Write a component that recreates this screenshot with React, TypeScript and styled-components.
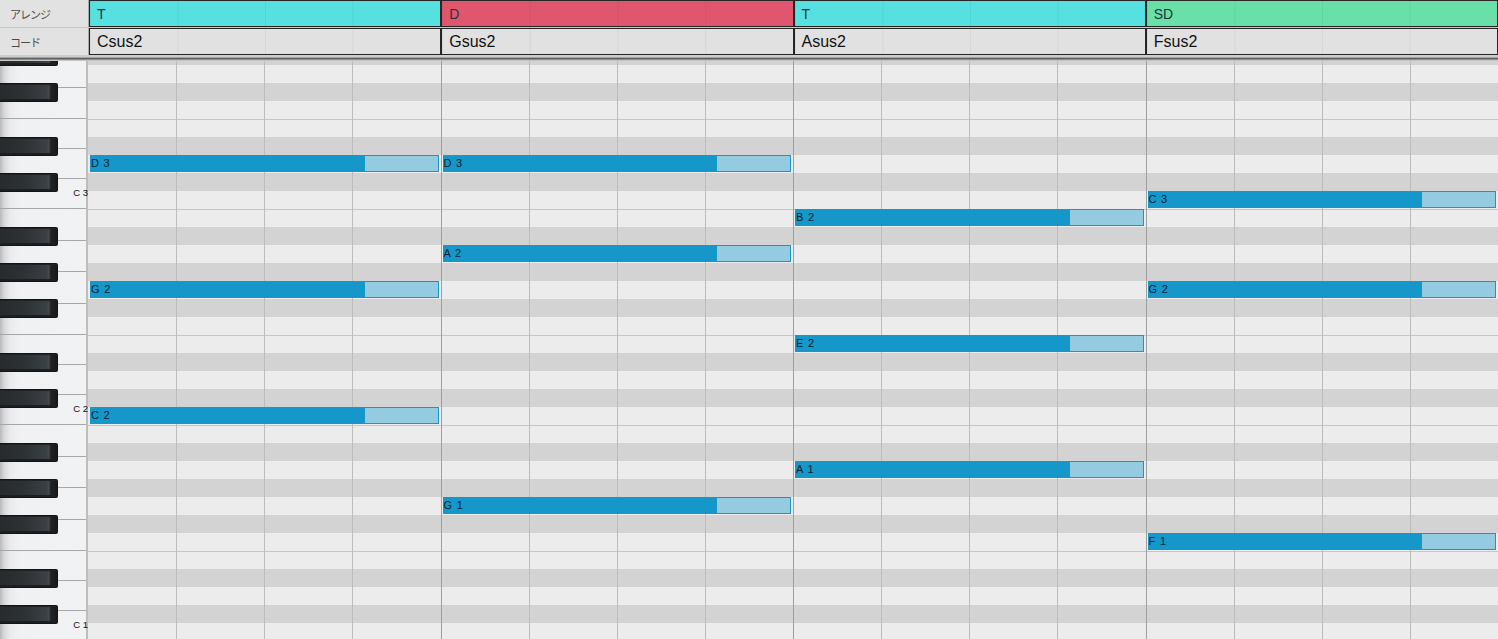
import React from 'react';
import styled, { createGlobalStyle } from 'styled-components';

const GlobalStyle = createGlobalStyle`
  html, body { margin: 0; padding: 0; background: #e2e2e2; overflow: hidden; }
  body { font-family: "Liberation Sans", Arial, sans-serif; }
`;

const NAMES = ['C', 'C#', 'D', 'D#', 'E', 'F', 'F#', 'G', 'G#', 'A', 'A#', 'B'];
const TOP_PITCH = 47; // B3
const ROWS = 36; // B3 .. C1
const BLACK = [1, 3, 6, 8, 10];

const pitchOf = (name: string, oct: number) => oct * 12 + NAMES.indexOf(name);
const rowOf = (p: number) => TOP_PITCH - p;

type Section = { label: string; color: string; chord: string; notes: [string, number][] };

const SECTIONS: Section[] = [
  { label: 'T', color: '#56e0e0', chord: 'Csus2', notes: [['D', 3], ['G', 2], ['C', 2]] },
  { label: 'D', color: '#e0566f', chord: 'Gsus2', notes: [['D', 3], ['A', 2], ['G', 1]] },
  { label: 'T', color: '#56e0e0', chord: 'Asus2', notes: [['B', 2], ['E', 2], ['A', 1]] },
  { label: 'SD', color: '#68e0a8', chord: 'Fsus2', notes: [['C', 3], ['G', 2], ['F', 1]] },
];

const Frame = styled.div`
  width: 1498px;
  height: 639px;
  display: flex;
  flex-direction: column;
  overflow: hidden;
  background: #e2e2e2;
`;

const Header = styled.div`
  display: grid;
  grid-template-columns: 89px repeat(4, minmax(0, 1fr));
  grid-template-rows: 27px 27px;
  row-gap: 1px;
  background: #c6c6c6;
  flex: none;
`;

const RowLabel = styled.div`
  grid-column: 1;
  display: flex;
  align-items: center;
  padding-left: 10px;
  background: #e2e2e2;
  border-right: 1px solid #a8a8a8;
  font-family: "Noto Sans CJK JP", "Liberation Sans", sans-serif;
  font-size: 11px;
  letter-spacing: -1px;
  color: #4a4a4a;
`;

const HeaderCell = styled.div<{ $bg: string; $size: number; $ink: string }>`
  display: flex;
  align-items: center;
  padding-left: 7px;
  min-width: 0;
  border: 1px solid #262626;
  background-color: ${(p) => p.$bg};
  background-image: linear-gradient(90deg, rgba(0, 0, 0, 0.05) 1px, transparent 1px);
  background-size: 25% 100%;
  font-size: ${(p) => p.$size}px;
  color: ${(p) => p.$ink};
  white-space: nowrap;
`;

const Separator = styled.div`
  flex: none;
  height: 6px;
  background: linear-gradient(
    to bottom,
    #cdcdcd 0 2px,
    #a3a3a3 2px 3px,
    #5f5f5f 3px 4px,
    #8e8e8e 4px 5px,
    #c4c4c4 5px 6px
  );
`;

const Body = styled.div`
  flex: 1;
  display: flex;
  overflow: hidden;
  min-height: 0;
`;

const Keyboard = styled.div`
  flex: none;
  width: 88px;
  box-sizing: border-box;
  border-right: 2px solid #bdbdbd;
  overflow: visible;
`;

const KeyStack = styled.div`
  display: grid;
  grid-template-areas: 'stack';
  margin-top: -68px;
`;

const WhiteKeys = styled.div`
  grid-area: stack;
  display: flex;
  flex-direction: column;
`;

const WhiteKey = styled.div<{ $h: number }>`
  height: ${(p) => p.$h}px;
  flex: none;
  box-sizing: border-box;
  border-bottom: 1px solid #a6a6a6;
  background: linear-gradient(90deg, #b9b9bb 0px, #d6d7d9 4px, #e9eaec 10px, #f0f1f3 18px, #f1f2f4 100%);
  display: flex;
  justify-content: flex-end;
  align-items: flex-end;
`;

const KeyLabel = styled.span`
  font-size: 9.5px;
  line-height: 10px;
  color: #111;
  margin-bottom: 10px;
  margin-right: -2px;
  white-space: nowrap;
`;

const BlackKeys = styled.div`
  grid-area: stack;
  display: grid;
  grid-template-rows: repeat(${ROWS}, 18px);
  align-self: start;
`;

const BlackKey = styled.div<{ $row: number }>`
  grid-row: ${(p) => p.$row};
  width: 58px;
  height: 19px;
  box-sizing: border-box;
  border: 1px solid #121415;
  border-left: none;
  border-radius: 0 2px 2px 0;
  background: linear-gradient(
    90deg,
    #272b2d 0%,
    #2d3235 45%,
    #3a4044 82%,
    #43494d 86%,
    #1f2224 89%,
    #181a1b 100%
  );
  box-shadow: inset 0 -2px 0 #1c1f21, inset 0 1px 0 #202325;
`;

const Roll = styled.div`
  flex: 1;
  min-width: 0;
  align-self: flex-start;
  margin-top: -68px;
  display: grid;
  grid-template-columns: repeat(16, minmax(0, 1fr));
  grid-template-rows: repeat(${ROWS}, 18px);
`;

const Stripe = styled.div<{ $row: number; $dark: boolean; $line: boolean }>`
  grid-column: 1 / -1;
  grid-row: ${(p) => p.$row};
  background: ${(p) => (p.$dark ? '#d3d3d3' : '#ececec')};
  box-shadow: ${(p) => (p.$line ? 'inset 0 1px 0 #c6c6c6' : 'none')};
`;

const BeatLine = styled.div<{ $col: number; $bar: boolean }>`
  grid-column: ${(p) => p.$col};
  grid-row: 1 / -1;
  border-left: 1px solid ${(p) => (p.$bar ? '#9f9f9f' : '#bcbcbc')};
`;

const Note = styled.div<{ $row: number; $col: number }>`
  grid-row: ${(p) => p.$row};
  grid-column: ${(p) => p.$col} / span 4;
  align-self: start;
  height: 17px;
  margin: 0 2px 0 2px;
  display: flex;
  min-width: 0;
`;

const NoteBody = styled.div`
  flex: 0 0 78.2%;
  background: #1597c9;
  padding-left: 1px;
  font-size: 11px;
  line-height: 17px;
  letter-spacing: 0.8px;
  color: #0a2431;
  white-space: nowrap;
  overflow: hidden;
`;

const NoteTail = styled.div`
  flex: 1;
  box-sizing: border-box;
  background: #94cbe0;
  border: 1px solid #1597c9;
`;

type WK = { name: string; oct: number; h: number };
const whiteKeys: WK[] = [];
for (const oct of [3, 2, 1]) {
  for (const n of ['B', 'A', 'G', 'F']) whiteKeys.push({ name: n, oct, h: 31.5 });
  for (const n of ['E', 'D', 'C']) whiteKeys.push({ name: n, oct, h: 30 });
}

const rows = Array.from({ length: ROWS }, (_, i) => {
  const p = TOP_PITCH - i;
  const pc = ((p % 12) + 12) % 12;
  return { row: i + 1, black: BLACK.includes(pc), line: pc === 4 || pc === 11 };
});

export default function App() {
  return (
    <>
      <GlobalStyle />
      <Frame>
        <Header>
          <RowLabel>アレンジ</RowLabel>
          {SECTIONS.map((s, i) => (
            <HeaderCell key={`a${i}`} $bg={s.color} $size={14} $ink="#1f3535">
              {s.label}
            </HeaderCell>
          ))}
          <RowLabel>コード</RowLabel>
          {SECTIONS.map((s, i) => (
            <HeaderCell key={`c${i}`} $bg="#e1e1e1" $size={16} $ink="#111111">
              {s.chord}
            </HeaderCell>
          ))}
        </Header>
        <Separator />
        <Body>
          <Keyboard>
            <KeyStack>
              <WhiteKeys>
                {whiteKeys.map((k, i) => (
                  <WhiteKey key={i} $h={k.h}>
                    {k.name === 'C' && <KeyLabel>{`C ${k.oct}`}</KeyLabel>}
                  </WhiteKey>
                ))}
              </WhiteKeys>
              <BlackKeys>
                {rows.filter((r) => r.black).map((r) => (
                  <BlackKey key={r.row} $row={r.row} />
                ))}
              </BlackKeys>
            </KeyStack>
          </Keyboard>
          <Roll>
            {rows.map((r) => (
              <Stripe key={`s${r.row}`} $row={r.row} $dark={r.black} $line={r.line} />
            ))}
            {Array.from({ length: 15 }, (_, i) => i + 2).map((c) => (
              <BeatLine key={`b${c}`} $col={c} $bar={(c - 1) % 4 === 0} />
            ))}
            {SECTIONS.flatMap((s, bar) =>
              s.notes.map(([n, o]) => (
                <Note key={`${bar}${n}${o}`} $row={rowOf(pitchOf(n, o)) + 1} $col={bar * 4 + 1}>
                  <NoteBody>{`${n} ${o}`}</NoteBody>
                  <NoteTail />
                </Note>
              ))
            )}
          </Roll>
        </Body>
      </Frame>
    </>
  );
}
